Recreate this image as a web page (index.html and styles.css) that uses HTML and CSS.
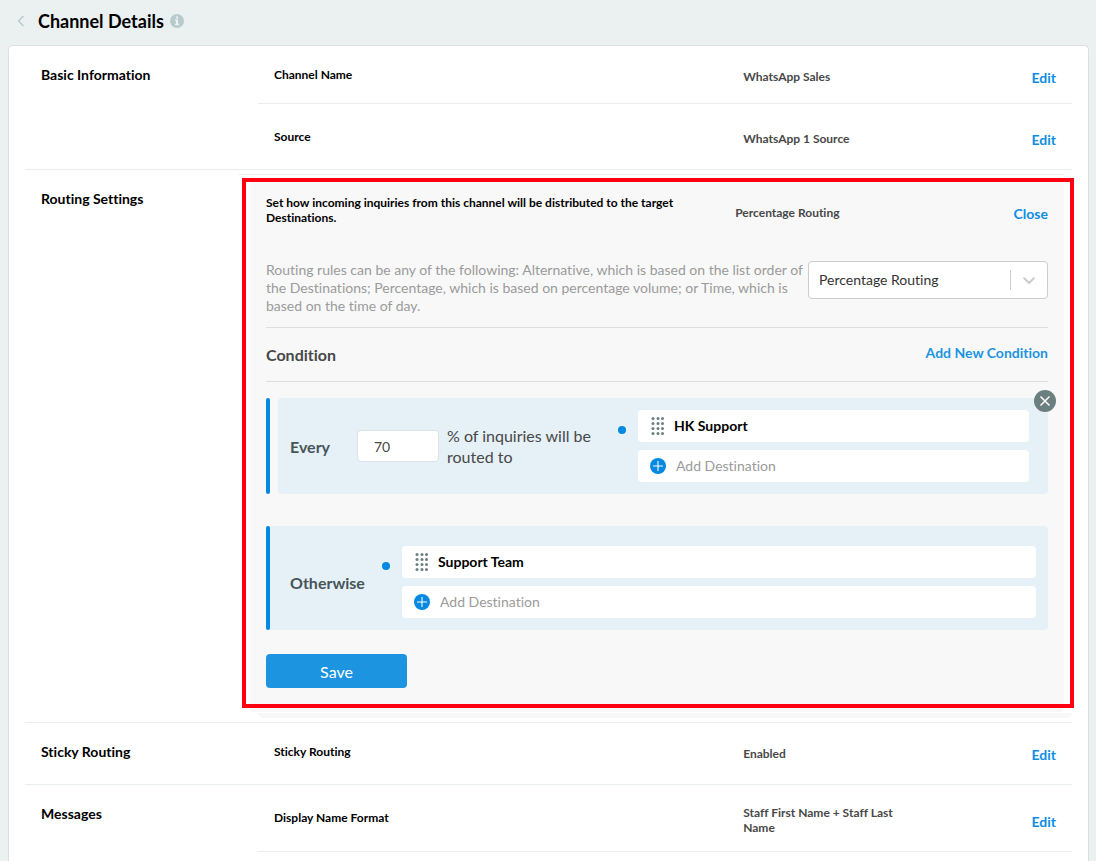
FILE: index.html
```html
<!DOCTYPE html>
<html lang="en">
<head>
  <meta charset="UTF-8">
  <meta name="viewport" content="width=device-width, initial-scale=1.0">
  <title>Channel Details</title>
  <link rel="stylesheet" href="styles.css">
</head>
<body>
  <header class="page-header">
    <a href="#" class="back" aria-label="Back">
      <svg width="8" height="12" viewBox="0 0 8 12"><path d="M6.5 1L1.5 6l5 5" fill="none" stroke="#b4c8ca" stroke-width="1.3"/></svg>
    </a>
    <h1>Channel Details</h1>
    <svg class="info" width="14" height="14" viewBox="0 0 14 14">
      <circle cx="7" cy="7" r="7" fill="#b7cbcd"/>
      <path d="M5.9 2.5h2.2v2H5.9zM5 5.6h3v4.2h1v1.4H5V9.8h1V7H5z" fill="#ecf1f1"/>
    </svg>
  </header>

  <main class="card">
    <section class="section">
      <h2>Basic Information</h2>
      <div class="rows">
        <div class="row">
          <div class="label">Channel Name</div>
          <div class="value">WhatsApp Sales</div>
          <button class="link">Edit</button>
        </div>
        <div class="row">
          <div class="label">Source</div>
          <div class="value">WhatsApp 1 Source</div>
          <button class="link">Edit</button>
        </div>
      </div>
    </section>

    <section class="section routing">
      <h2>Routing Settings</h2>
      <div class="routing-area">
        <div class="highlight">
          <form class="panel">
            <div class="row panel-head">
              <div class="label">Set how incoming inquiries from this channel will be distributed to the target Destinations.</div>
              <div class="value">Percentage Routing</div>
              <button type="button" class="link">Close</button>
            </div>

            <div class="rule">
              <label for="routing-rule">Routing rules can be any of the following: Alternative, which is based on the list order of the Destinations; Percentage, which is based on percentage volume; or Time, which is based on the time of day.</label>
              <div class="select">
                <select id="routing-rule">
                  <option>Alternative Routing</option>
                  <option selected>Percentage Routing</option>
                  <option>Time Routing</option>
                </select>
                <svg class="arrow" width="12" height="8" viewBox="0 0 12 8"><path d="M1.2 1.2L6 6l4.8-4.8" fill="none" stroke="#ccc" stroke-width="2" stroke-linecap="round" stroke-linejoin="round"/></svg>
              </div>
            </div>

            <div class="condition-head">
              <h3>Condition</h3>
              <button type="button" class="link add-condition">Add New Condition</button>
            </div>

            <div class="condition every">
              <label class="when" for="percent">Every</label>
              <input type="text" id="percent" class="percent" value="70">
              <span class="unit">% of inquiries will be routed to</span>
              <span class="dot"></span>
              <div class="destinations">
                <div class="destination">
                  <svg class="grip" width="14" height="18" viewBox="0 0 14 18" fill="#6b7f80">
                    <circle cx="3" cy="1.5" r="1.5"/><circle cx="8" cy="1.5" r="1.5"/><circle cx="12.5" cy="1.5" r="1.5"/>
                    <circle cx="3" cy="6.5" r="1.5"/><circle cx="8" cy="6.5" r="1.5"/><circle cx="12.5" cy="6.5" r="1.5"/>
                    <circle cx="3" cy="11.5" r="1.5"/><circle cx="8" cy="11.5" r="1.5"/><circle cx="12.5" cy="11.5" r="1.5"/>
                    <circle cx="3" cy="16.5" r="1.5"/><circle cx="8" cy="16.5" r="1.5"/><circle cx="12.5" cy="16.5" r="1.5"/>
                  </svg>
                  HK Support
                </div>
                <button type="button" class="destination add">
                  <svg width="16" height="16" viewBox="0 0 16 16"><circle cx="8" cy="8" r="8" fill="#0389e2"/><path d="M8 3v10M3 8h10" stroke="#fff" stroke-width="1.1"/></svg>
                  Add Destination
                </button>
              </div>
              <button type="button" class="remove" aria-label="Remove condition">
                <svg width="22" height="22" viewBox="0 0 22 22"><circle cx="11" cy="11" r="11" fill="#6b7f80"/><path d="M6.5 6.5l9 9M15.5 6.5l-9 9" stroke="#fff" stroke-width="1.5"/></svg>
              </button>
            </div>

            <div class="condition otherwise">
              <span class="when">Otherwise</span>
              <span class="dot"></span>
              <div class="destinations">
                <div class="destination">
                  <svg class="grip" width="14" height="18" viewBox="0 0 14 18" fill="#6b7f80">
                    <circle cx="3" cy="1.5" r="1.5"/><circle cx="8" cy="1.5" r="1.5"/><circle cx="12.5" cy="1.5" r="1.5"/>
                    <circle cx="3" cy="6.5" r="1.5"/><circle cx="8" cy="6.5" r="1.5"/><circle cx="12.5" cy="6.5" r="1.5"/>
                    <circle cx="3" cy="11.5" r="1.5"/><circle cx="8" cy="11.5" r="1.5"/><circle cx="12.5" cy="11.5" r="1.5"/>
                    <circle cx="3" cy="16.5" r="1.5"/><circle cx="8" cy="16.5" r="1.5"/><circle cx="12.5" cy="16.5" r="1.5"/>
                  </svg>
                  Support Team
                </div>
                <button type="button" class="destination add">
                  <svg width="16" height="16" viewBox="0 0 16 16"><circle cx="8" cy="8" r="8" fill="#0389e2"/><path d="M8 3v10M3 8h10" stroke="#fff" stroke-width="1.1"/></svg>
                  Add Destination
                </button>
              </div>
            </div>

            <button type="button" class="save">Save</button>
          </form>
        </div>
        <div class="panel-edge"></div>
        <div class="area-edge"></div>
      </div>
    </section>

    <section class="section">
      <h2>Sticky Routing</h2>
      <div class="rows">
        <div class="row">
          <div class="label">Sticky Routing</div>
          <div class="value">Enabled</div>
          <button class="link">Edit</button>
        </div>
      </div>
    </section>

    <section class="section messages">
      <h2>Messages</h2>
      <div class="rows">
        <div class="row">
          <div class="label">Display Name Format</div>
          <div class="value">Staff First Name + Staff Last Name</div>
          <button class="link">Edit</button>
        </div>
      </div>
    </section>
  </main>
</body>
</html>
```
FILE: styles.css
```css
* { box-sizing: border-box; }
body {
  margin: 0; min-height: 100vh; padding: 0 7px 0 8px;
  display: flex; flex-direction: column;
  background: #ebf1f1; color: #000;
  font-family: Lato, "Open Sans", sans-serif; font-size: 14px;
  font-variant-ligatures: none;
}
h1, h2, h3 { margin: 0; font-weight: bold; }
button, input, select { font-family: inherit; font-variant-ligatures: inherit; }
button { border: none; background: none; padding: 0; cursor: pointer; }
svg { display: block; flex: none; }

.page-header {
  display: flex; align-items: center; height: 45px;
  padding: 0 9px 3px;
}
.page-header h1 { font-size: 18px; line-height: 24px; margin: 0 6px 0 13px; }

.card {
  flex: 1; padding: 0 16px; background: #fff;
  border: 1px solid #dcdfdf; border-bottom: none;
  border-radius: 5px 5px 0 0;
}
.section {
  display: grid; grid-template-columns: 233px minmax(0, 1fr);
  border-bottom: 1px solid #e8eeee;
}
.section h2 { font-size: 14px; line-height: 18px; padding: 20px 16px 0; }
.messages { border-bottom: none; }
.rows { padding-bottom: 4px; }
.row {
  display: grid; grid-template-columns: minmax(0, 3fr) minmax(0, 1fr) minmax(0, 1fr);
  align-items: center; padding: 15px 16px 8px;
}
.row + .row { padding-top: 19px; border-top: 1px solid #ebeeee; }
.messages .row { border-bottom: 1px solid #ebeeee; }

.label { font-size: 12px; line-height: 15px; font-weight: bold; padding-bottom: 8px; }
.value { font-size: 12px; line-height: 15px; font-weight: bold; color: #484848; padding: 5px 0 8px; }
.link {
  justify-self: end; padding: 8px 0;
  font-size: 14px; line-height: 18px; font-weight: bold; color: #0d8de3;
}

/* routing panel */
.routing-area { margin: 4px 0 4px -19px; }
.routing-area::before {
  content: ""; display: block; height: 1px; margin: 0 8px 3px 0;
  background: #ebeeee;
}
.highlight {
  margin: 0 -2px 0 3px; padding: 0 6px 0 4px;
  border: 4px solid #fe0010; background: #fff;
}
.panel { padding: 0 16px 16px; background: #f8f8f8; }
.panel-head { padding: 13px 0 0; }
.panel-edge { height: 4px; margin: 0 8px 0 11px; background: #f8f8f8; border-radius: 0 0 5px 5px; }
.area-edge { height: 5px; margin: 1px 0 0 19px; background: #f8f8f8; border-radius: 0 0 5px 5px; }

.rule {
  display: flex; align-items: flex-start; gap: 4px;
  margin-top: 28px; padding-bottom: 12px;
  border-bottom: 1px solid #dedede;
}
.rule label { flex: 1; line-height: 18px; color: #9b9b9b; }
.select { position: relative; width: 240px; }
.select select {
  appearance: none; display: block; width: 100%; height: 38px; padding: 0 48px 2px 10px;
  border: 1px solid #ccc; border-radius: 4px; background: #fff;
  font-size: 14px; color: #333;
}
.select::after {
  content: ""; position: absolute; top: 9px; right: 37px;
  width: 1px; height: 20px; background: #ccc;
}
.arrow { position: absolute; top: 16px; right: 13px; pointer-events: none; }

.condition-head {
  display: flex; justify-content: space-between; align-items: center;
  height: 54px; border-bottom: 1px solid #dedede; margin-bottom: 16px;
}
.condition-head h3 { font-size: 16px; line-height: 20px; color: #484848; }
.add-condition { color: #1c94e0; padding: 0 0 4px; }

.condition {
  position: relative; display: flex; align-items: center;
  background: #e5f0f7; border-radius: 4px;
}
.condition::before {
  content: ""; position: absolute; left: 0; top: 0; bottom: 0;
  width: 4px; border-radius: 2px; background: #0389e2;
}
.every { margin: 0 0 32px 12px; padding: 12px 19px 12px 12px; }
.every::before { left: -12px; }
.otherwise { padding: 20px 12px 12px 24px; margin-bottom: 24px; }
.when { font-size: 16px; line-height: 20px; font-weight: bold; color: #455558; padding-top: 2px; }
.every .when { width: 67px; }
.otherwise .when { width: 92px; }
.percent {
  width: 82px; height: 32px; padding: 0 16px;
  border: 1px solid #dde2e3; border-radius: 4px; background: #fff;
  font-size: 14px; color: #484848;
}
.unit { width: 179px; padding: 0 20px 0 8px; font-size: 16px; line-height: 21px; color: #484848; }
.dot { width: 8px; height: 8px; margin-right: 12px; margin-bottom: 32px; border-radius: 50%; background: #0389e2; }

.destinations { flex: 1; display: flex; flex-direction: column; gap: 8px; }
.destination {
  display: flex; align-items: center; gap: 10px; height: 32px; padding: 0 12px;
  background: #fff; border-radius: 4px;
  font-size: 14px; line-height: 18px; font-weight: bold;
}
.destination.add { font-weight: normal; color: #9b9b9b; }
.remove { position: absolute; top: -8px; right: -8px; }

.save {
  display: block; width: 141px; height: 34px; border-radius: 4px;
  background: #1c94e0; color: #fff; font-size: 16px;
}
```
